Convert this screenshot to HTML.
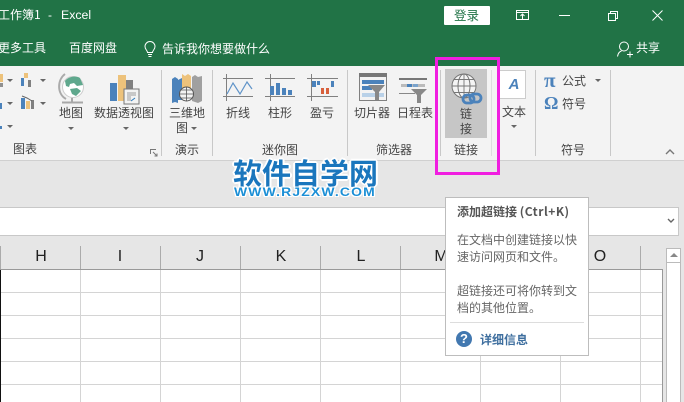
<!DOCTYPE html>
<html lang="zh"><head><meta charset="utf-8"><style>
html,body{margin:0;padding:0;width:684px;height:402px;overflow:hidden;background:#fff}
body{position:relative;font-family:"Liberation Sans","Noto Sans CJK SC",sans-serif;font-size:12px;color:#444}
.a{position:absolute}
.t{position:absolute;white-space:nowrap;line-height:16px;font-family:"Noto Sans CJK SC","Liberation Sans",sans-serif;font-size:12px;color:#444}
.c{text-align:center;transform:translateX(-50%)}
.w{color:#fff}
.sep{position:absolute;top:70px;height:86px;width:1px;background:#c8c8c8}
.arr{position:absolute;width:0;height:0;border-left:3px solid transparent;border-right:3px solid transparent;border-top:3px solid #666}
.h{position:absolute;top:246px;line-height:22px;font-size:16px;color:#222;transform:translateX(-50%);font-family:"Liberation Sans",sans-serif}
</style></head><body>
<div class="a" style="left:0;top:0;width:684px;height:66px;background:#217346"></div>
<div class="t w" style="left:-2px;top:7px;font-size:12px">工作簿1</div>
<div class="t w" style="left:48px;top:7px;font-size:12px;font-family:'Liberation Sans'">-</div>
<div class="t w" style="left:61px;top:7px;font-size:12.300px;font-family:'Liberation Sans'">Excel</div>
<div class="a" style="left:444px;top:6px;width:46px;height:19px;background:#fff;border-radius:1px"></div>
<div class="t" style="left:454px;top:7px;color:#217346;font-size:12.500px">登录</div>
<svg class="a" style="left:510px;top:5px" width="174" height="22" fill="none" stroke="#fff" stroke-width="1">
<path d="M6.500 5.500h12v9h-12zM6.500 7.500h12M12.500 14v-5M10.500 11l2-2 2 2"/>
<path d="M49 10.500h11"/>
<path d="M98.500 8.500h7v7h-7zM100.500 8.500v-2h7v7h-2"/>
<path d="M142.500 5.500l10 10M152.500 5.500l-10 10"/>
</svg>
<div class="t w" style="left:-2px;top:40px;font-size:12px">更多工具</div>
<div class="t w" style="left:69px;top:40px;font-size:12px">百度网盘</div>
<svg class="a" style="left:143px;top:41px" width="14" height="18" fill="none" stroke="#fff" stroke-width="1"><path d="M4.500 11.500c0-2-2.500-3-2.500-6a5 5 0 0 1 10 0c0 3-2.500 4-2.500 6zM5 13.500h4M5.500 15.500h3"/></svg>
<div class="t w" style="left:162px;top:41px;font-size:12px">告诉我你想要做什么</div>
<svg class="a" style="left:616px;top:40px" width="20" height="18" fill="none" stroke="#fff" stroke-width="1"><circle cx="8" cy="6.500" r="4.500"/><path d="M1.500 16.500c.5-3 2-5 4-5.500M11 14.500h6M14 11.500v6"/></svg>
<div class="t w" style="left:636px;top:40px;font-size:12px">共享</div>

<div class="a" style="left:0;top:66px;width:684px;height:94px;background:#f3f3f3"></div>
<div class="a" style="left:0;top:160px;width:684px;height:47px;background:#e6e6e6;border-top:1px solid #d0d0d0;box-sizing:border-box"></div>
<div class="sep" style="left:161px"></div><div class="sep" style="left:212px"></div><div class="sep" style="left:347px"></div><div class="sep" style="left:440px"></div><div class="sep" style="left:491px;background:#ddd"></div><div class="sep" style="left:535px"></div><div class="sep" style="left:610px"></div>

<svg class="a" style="left:0;top:66px" width="50" height="64">
<rect x="0" y="8" width="3" height="8" fill="#edc27b"/><rect x="0" y="17" width="3" height="4" fill="#909090"/>
<rect x="21" y="12" width="3" height="8" fill="#4b82bb"/><rect x="24" y="7" width="4" height="5" fill="#edc27b"/><rect x="28" y="14" width="3" height="7" fill="#808080"/>
<rect x="21" y="32" width="4" height="11" fill="#4b82bb"/><rect x="26" y="35" width="4" height="8" fill="#edc27b"/><rect x="31" y="34" width="3" height="9" fill="#808080"/>
<path d="M22 30l5 2 5 3" stroke="#666" fill="none"/>
<rect x="0" y="37" width="2" height="6" fill="#4b82bb"/><rect x="0" y="60" width="2" height="3" fill="#4b82bb"/>
</svg>
<div class="arr" style="left:7px;top:79px"></div><div class="arr" style="left:40px;top:79px"></div><div class="arr" style="left:7px;top:102px"></div><div class="arr" style="left:40px;top:102px"></div><div class="arr" style="left:7px;top:125px"></div>

<svg class="a" style="left:58px;top:72px" width="28" height="32">
<path d="M7 2C-1 8-1 22 8 27" fill="none" stroke="#aaa" stroke-width="2"/><path d="M4 30.500h21M14 26v4" stroke="#a8a8a8" stroke-width="2"/>
<circle cx="15" cy="15" r="10.500" fill="#fff" stroke="#ccc"/>
<path d="M7 9c3-4 10-6 15-3l3 7-6 1-3-3-4 1-1 3-3-1zM12 17l7-1 4 3-5 5-4-2z" fill="#5fa88d"/>
</svg>
<div class="t c" style="left:71px;top:105px">地图</div><div class="arr" style="left:68px;top:127px"></div>

<svg class="a" style="left:109px;top:74px" width="32" height="32">
<rect x="1" y="9" width="7" height="18" fill="#4b82bb"/><rect x="9" y="1" width="8" height="26" fill="#edc27b"/><rect x="17" y="6" width="7" height="9" fill="#808080"/>
<rect x="15" y="15" width="15" height="15" fill="#f3f3f3" stroke="#777"/><path d="M18 18h9v4h-5v5h-4z" fill="#c8c8c8"/><path d="M22 27l4-3" stroke="#2b7cc0"/>
</svg>
<div class="t c" style="left:124px;top:105px">数据透视图</div><div class="arr" style="left:123px;top:127px"></div>
<div class="t c" style="left:25px;top:141px">图表</div>
<svg class="a" style="left:150px;top:149px" width="8" height="8" fill="none" stroke="#777"><path d="M.5 5V.5H6"/><path d="M3 3l4 4M4.500 7H7V4.500"/></svg>

<svg class="a" style="left:171px;top:73px" width="32" height="30">
<path d="M1 6l3-2 3 2v24l-3-1-3 1z" fill="#4b82bb"/><path d="M7 7l4-2 4 2v20H7z" fill="#4b82bb"/><path d="M11 1l3 2 3-2 3 2v16H11z" fill="#edc27b"/><path d="M21 4l3-2 3 2 4-1v25l-4 2-6-2z" fill="#a0a0a0"/>
<circle cx="15.500" cy="21" r="7" fill="#f3f3f3" stroke="#555"/><path d="M8.500 21h14M15.500 14v14M10 17h11M10 25h11" stroke="#555" stroke-width=".8"/>
</svg>
<div class="t c" style="left:187px;top:105px">三维地</div>
<div class="t" style="left:176px;top:120px">图</div><div class="arr" style="left:191px;top:127px"></div>
<div class="t c" style="left:187px;top:142px">演示</div>

<svg class="a" style="left:222px;top:73px" width="120" height="30" fill="none">
<g stroke="#808080"><path d="M1 5.500h30M1 23.500h30M4.500 1v27M43 5.500h30M43 23.500h30M48.500 1v27M85 5.500h31M85 23.500h31M89.500 1v27"/></g>
<path d="M5 21l6-11 7 11 7-12 5 7" stroke="#5f93c8" stroke-width="1.200"/>
<g fill="#4b82bb"><rect x="48" y="13" width="4" height="9"/><rect x="54" y="10" width="4" height="12"/><rect x="60" y="15" width="4" height="7"/><rect x="66" y="17" width="4" height="5"/>
<rect x="90" y="8" width="4" height="6"/><rect x="95" y="8" width="3" height="4"/><rect x="109" y="8" width="3" height="6"/></g>
<rect x="99" y="15" width="3" height="6" fill="#d8603c"/><rect x="104" y="15" width="3" height="6" fill="#d8603c"/>
</svg>
<div class="t c" style="left:238px;top:105px">折线</div><div class="t c" style="left:280px;top:105px">柱形</div><div class="t c" style="left:322px;top:105px">盈亏</div>
<div class="t c" style="left:280px;top:142px">迷你图</div>

<svg class="a" style="left:358px;top:73px" width="90" height="31" fill="none">
<rect x="1.500" y=".5" width="27" height="27" fill="#f3f3f3" stroke="#808080"/><rect x="1" y="0" width="28" height="4" fill="#777"/>
<rect x="4" y="7" width="22" height="4" fill="#4b82bb"/><rect x="4" y="13" width="10" height="4" fill="#4b82bb"/><rect x="4" y="20" width="22" height="4" fill="#b9d1e8"/>
<path d="M10 12h17l-6 7v8h-4v-8z" fill="#888"/>
<rect x="42" y="5" width="28" height="15" fill="#f3f3f3"/><rect x="41" y="5" width="28" height="2" fill="#777"/><rect x="41" y="20" width="16" height="1" fill="#888"/><rect x="43" y="11" width="24" height="3" fill="#bbb"/><rect x="49" y="11" width="5" height="3" fill="#4b82bb"/><rect x="55" y="11" width="5" height="3" fill="#7aa3cc"/>
<path d="M53 16h16l-6 6v8h-4v-8z" fill="#888"/>
</svg>
<div class="t c" style="left:372px;top:105px">切片器</div><div class="t c" style="left:415px;top:105px">日程表</div>
<div class="t c" style="left:394px;top:142px">筛选器</div>

<div class="a" style="left:445px;top:69px;width:42px;height:69px;background:#c6c6c6"></div>
<svg class="a" style="left:450px;top:73px" width="36" height="34" fill="none">
<circle cx="14" cy="13" r="12" fill="#f4f4f4" stroke="#777"/><ellipse cx="14" cy="13" rx="6" ry="12" stroke="#777"/><path d="M2 13h24M14 1v24M4 6.500h20M4 19.500h20" stroke="#777" stroke-width=".9"/>
<rect x="13" y="22" width="11" height="8" rx="4" stroke="#4b82bb" stroke-width="2.800"/><rect x="20" y="21" width="11" height="8" rx="4" stroke="#4b82bb" stroke-width="2.800"/>
</svg>
<div class="t c" style="left:466px;top:106px">链</div><div class="t c" style="left:466px;top:121px">接</div>
<div class="t c" style="left:466px;top:142px">链接</div>

<div class="a" style="left:499px;top:70px;width:27px;height:29px;background:#fff;border:1px solid #ccc;box-sizing:border-box"></div>
<div class="a" style="left:499px;top:73px;width:30px;text-align:center;font:italic bold 15px 'Liberation Sans';line-height:24px;color:#4b82bb">A</div>
<div class="t c" style="left:514px;top:104px">文本</div><div class="arr" style="left:511px;top:125px"></div>

<div class="a" style="left:544px;top:68px;font:bold 21px 'Liberation Serif';line-height:24px;color:#4b82bb">π</div>
<div class="a" style="left:544px;top:91px;font:bold 18px 'Liberation Serif';line-height:24px;color:#4b82bb">Ω</div>
<div class="t" style="left:562px;top:73px">公式</div><div class="arr" style="left:595px;top:79px"></div>
<div class="t" style="left:562px;top:96px">符号</div>
<div class="t c" style="left:573px;top:142px">符号</div>
<svg class="a" style="left:664px;top:148px" width="12" height="8" fill="none" stroke="#777" stroke-width="1.400"><path d="M2 6l4-4 4 4"/></svg>

<div class="a" style="left:0;top:207px;width:684px;height:29px;background:#e6e6e6"></div>
<div class="a" style="left:0;top:207px;width:679px;height:29px;background:#fff;border-top:1px solid #c8c8c8;border-right:1px solid #c8c8c8;border-bottom:1px solid #c8c8c8;box-sizing:border-box"></div>
<svg class="a" style="left:667px;top:218px" width="8" height="6" fill="none" stroke="#666" stroke-width="1.400"><path d="M1 1l3 3 3-3"/></svg>

<div class="a" style="left:0;top:236px;width:684px;height:166px;background:#e6e6e6"></div>
<svg class="a" style="left:0;top:236px" width="684" height="166" shape-rendering="crispEdges">
<rect x="0" y="34" width="662" height="132" fill="#fff"/>
<path d="M0 33.500h662" stroke="#999" fill="none"/>
<g stroke="#ababab" fill="none"><path d="M.5 10v23M80.500 10v23M160.500 10v23M240.500 10v23M320.500 10v23M400.500 10v23M480.500 10v23M560.500 10v23M640.500 10v23"/></g>
<g stroke="#d4d4d4" fill="none"><path d="M80.500 34v132M160.500 34v132M240.500 34v132M320.500 34v132M400.500 34v132M480.500 34v132M560.500 34v132M640.500 34v132M0 56.500h662M0 79.500h662M0 102.500h662M0 125.500h662M0 148.500h662"/></g>
<path d="M.5 34v132" stroke="#111" fill="none"/>
<path d="M662.500 33v133" stroke="#999" fill="none"/>
<rect x="666.500" y="12.500" width="14" height="154" fill="#fff" stroke="#bbb"/>
<path d="M666 26.500h15" stroke="#bbb" fill="none"/>
</svg>
<svg class="a" style="left:669px;top:252px" width="10" height="6"><path d="M1 5l4-4 4 4z" fill="#888"/></svg>
<div class="h" style="left:41px">H</div><div class="h" style="left:120px">I</div><div class="h" style="left:200px">J</div><div class="h" style="left:281px">K</div><div class="h" style="left:361px">L</div><div class="h" style="left:441px">M</div><div class="h" style="left:600px">O</div>

<div class="a" style="left:233px;top:152px;font-family:'Noto Sans CJK SC',sans-serif;font-weight:700;font-size:29px;line-height:40px;color:#1a76bd;white-space:nowrap;text-shadow:1px 1px 0 #fff,-1px -1px 0 #fff,1px -1px 0 #fff,-1px 1px 0 #fff,2px 0 0 #fff,-2px 0 0 #fff,0 2px 0 #fff,0 -2px 0 #fff">软件自学网</div>
<div class="a" style="left:234px;top:186px;font-family:'Liberation Sans',sans-serif;font-weight:700;font-size:12px;line-height:13px;letter-spacing:1px;color:#1b8fd6;white-space:nowrap;transform:scaleX(1.160);transform-origin:0 0;text-shadow:1px 1px 0 #fff,-1px -1px 0 #fff,1px -1px 0 #fff,-1px 1px 0 #fff">WWW.RJZXW.COM</div>

<div class="a" style="left:435px;top:57px;width:65px;height:118px;border:3px solid #f01ee0;box-sizing:border-box"></div>

<div class="a" style="left:445px;top:197px;width:144px;height:159px;background:#fff;border:1px solid #bdbdbd;box-sizing:border-box"></div>
<div class="t" style="left:457px;top:204px;font-weight:700;color:#555;font-size:12px">添加超链接 <span style="letter-spacing:.500px">(Ctrl+K)</span></div>
<div class="t" style="left:457px;top:232px;color:#666;font-size:12px">在文档中创建链接以快</div>
<div class="t" style="left:457px;top:249px;color:#666;font-size:12px">速访问网页和文件。</div>
<div class="t" style="left:457px;top:283px;color:#666;font-size:12px">超链接还可将你转到文</div>
<div class="t" style="left:457px;top:300px;color:#666;font-size:12px">档的其他位置。</div>
<div class="a" style="left:450px;top:322px;width:134px;height:1px;background:#ddd"></div>
<div class="a" style="left:456px;top:331px;width:16px;height:16px;border-radius:50%;background:#4278b0;color:#fff;font:bold 13px/16px 'Liberation Sans';text-align:center">?</div>
<div class="t" style="left:480px;top:332px;font-weight:700;color:#3f6f9f;font-size:12px">详细信息</div>
</body></html>
